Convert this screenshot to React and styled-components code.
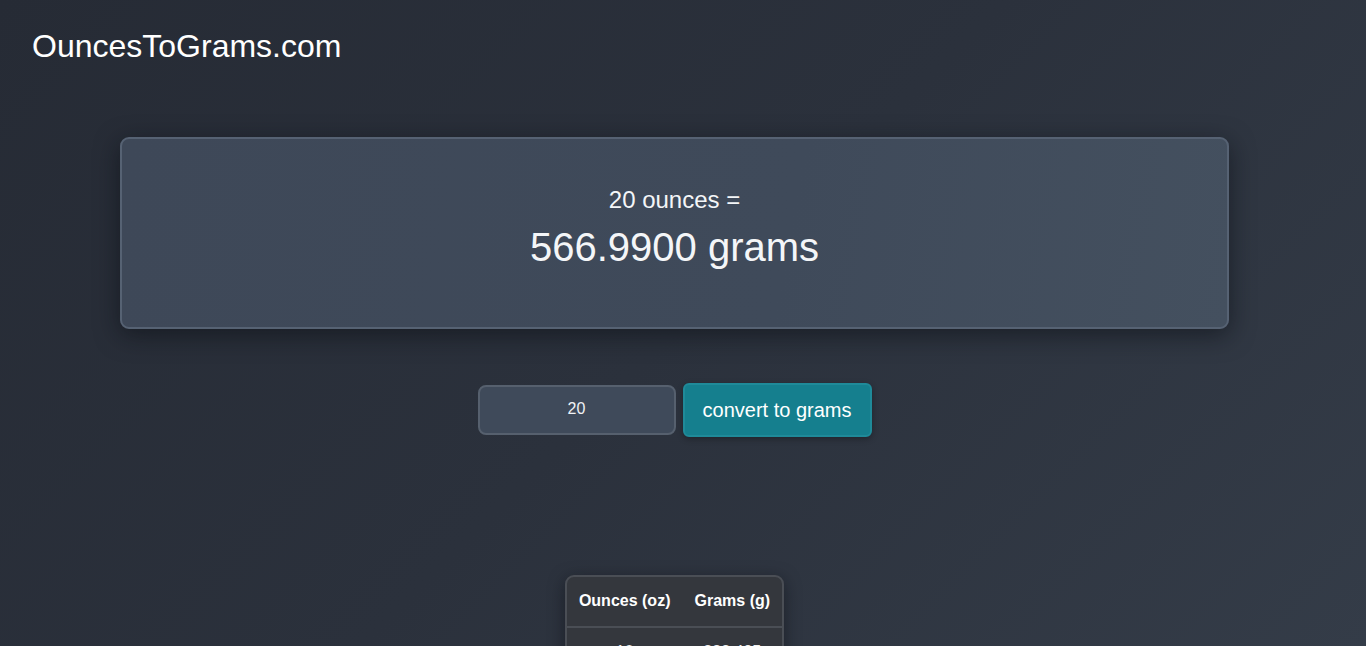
import React from "react";
import styled, { createGlobalStyle } from "styled-components";

const Global = createGlobalStyle`
  html {
    min-height: 100%;
    background: linear-gradient(135deg, #262b35 0%, #2b313c 50%, #343c48 100%);
    background-attachment: fixed;
  }
  body {
    margin: 0;
    font-family: "Liberation Sans", Arial, sans-serif;
    color: #ffffff;
  }
`;

const Page = styled.div`
  padding: 28px 49px 40px 32px;
`;

const Logo = styled.h1`
  margin: 0;
  font-size: 32px;
  font-weight: 400;
  line-height: 37px;
  color: #ffffff;
`;

const Main = styled.main`
  display: flex;
  flex-direction: column;
  align-items: center;
  margin-top: 72px;
`;

const ResultCard = styled.section`
  box-sizing: border-box;
  width: 100%;
  max-width: 1109px;
  height: 192px;
  border: 2px solid #566273;
  border-radius: 9px;
  background: linear-gradient(100deg, #3e4858 0%, #3f4a5a 60%, #44505f 100%);
  box-shadow: 0 6px 24px rgba(10, 12, 18, 0.55);
  display: flex;
  flex-direction: column;
  align-items: center;
  padding-top: 47px;
`;

const Equation = styled.p`
  margin: 0;
  font-size: 24px;
  line-height: 28px;
  color: #f4f6f8;
`;

const Result = styled.p`
  margin: 10px 0 0;
  font-size: 40px;
  line-height: 46px;
  color: #f4f6f8;
`;

const Form = styled.form`
  display: flex;
  align-items: center;
  gap: 7px;
  margin-top: 54px;
`;

const Input = styled.input`
  box-sizing: border-box;
  width: 198px;
  height: 50px;
  border: 2px solid #56606e;
  border-radius: 8px;
  background: #3f4a5a;
  color: #f0f2f5;
  font-family: "Liberation Sans", Arial, sans-serif;
  font-size: 16px;
  text-align: center;
  padding: 0 0 2px;
  outline: none;
`;

const Button = styled.button`
  box-sizing: border-box;
  width: 189px;
  height: 54px;
  border: 2px solid #1f8a99;
  border-radius: 6px;
  background: #157f8e;
  color: #ffffff;
  font-family: "Liberation Sans", Arial, sans-serif;
  font-size: 20px;
  padding: 0;
  cursor: pointer;
  box-shadow: 0 2px 6px rgba(0, 0, 0, 0.3);
`;

const TableWrap = styled.div`
  margin-top: 138px;
  border: 2px solid #4a4e55;
  border-radius: 9px;
  background: #34373d;
  overflow: hidden;
  box-shadow: 0 4px 16px rgba(10, 12, 18, 0.5);
`;

const Table = styled.table`
  border-collapse: collapse;
  font-size: 16px;
`;

const Th = styled.th`
  padding: 15px 12px 16px;
  font-weight: 700;
  color: #ffffff;
  text-align: center;
  border-bottom: 2px solid #4a4e55;
`;

const Td = styled.td`
  padding: 15px 12px;
  color: #f0f0f0;
  text-align: center;
  border-bottom: 1px solid #43474e;
`;

const rows = Array.from({ length: 60 }, (_, i) => {
  const oz = (i + 1) * 10;
  return { oz, g: +(oz * 28.3495).toFixed(3) };
});

export default function App() {
  return (
    <>
      <Global />
      <Page>
        <Logo>OuncesToGrams.com</Logo>
        <Main>
          <ResultCard>
            <Equation>20 ounces =</Equation>
            <Result>566.9900 grams</Result>
          </ResultCard>
          <Form onSubmit={(e) => e.preventDefault()}>
            <Input type="text" defaultValue="20" />
            <Button type="submit">convert to grams</Button>
          </Form>
          <TableWrap>
            <Table>
              <thead>
                <tr>
                  <Th>Ounces (oz)</Th>
                  <Th>Grams (g)</Th>
                </tr>
              </thead>
              <tbody>
                {rows.map((r) => (
                  <tr key={r.oz}>
                    <Td>{r.oz}</Td>
                    <Td>{r.g}</Td>
                  </tr>
                ))}
              </tbody>
            </Table>
          </TableWrap>
        </Main>
      </Page>
    </>
  );
}
